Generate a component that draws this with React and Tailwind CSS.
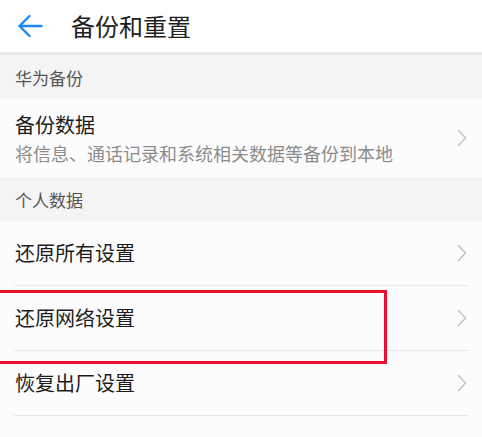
import React from "react";

const font = { fontFamily: '"Noto Sans CJK SC", "Noto Sans", sans-serif' };

function Chevron() {
  return (
    <svg width="10" height="18" viewBox="0 0 10 18" className="shrink-0">
      <path d="M1.5 1.5 L8.5 9 L1.5 16.5" fill="none" stroke="#c4c4c4" strokeWidth="1.6" strokeLinecap="round" strokeLinejoin="round" />
    </svg>
  );
}

function Row({ title, divider = true }) {
  return (
    <div className="h-[65px] flex flex-col">
      <div className="flex-1 flex items-center justify-between pl-[15px] pr-[15px]">
        <span className="text-[20px] leading-none text-[#1c1c1c]">{title}</span>
        <Chevron />
      </div>
      {divider && <div className="mx-[14px] h-px bg-[#e8e8e8]" />}
    </div>
  );
}

export default function App() {
  return (
    <div className="w-[482px] h-[437px] bg-[#fcfcfc] relative overflow-hidden" style={font}>
      <div className="h-[52px] bg-white flex items-center">
        <svg width="26" height="24" viewBox="0 0 26 24" className="ml-[17px]">
          <path d="M24.5 12 H2.5 M12.5 2 L2.5 12 L12.5 22" fill="none" stroke="#1f87f2" strokeWidth="2.4" strokeLinecap="round" strokeLinejoin="round" />
        </svg>
        <span className="ml-[28px] text-[24px] leading-none text-[#202020]">备份和重置</span>
      </div>
      <div className="h-[3px] bg-[#e6e6e6]" />
      <div className="h-[44px] bg-[#f4f4f4] flex items-center px-[15px]">
        <span className="text-[17px] leading-none text-[#555555]">华为备份</span>
      </div>
      <div className="h-[78px] bg-[#fcfcfc] flex items-center justify-between px-[15px]">
        <div className="flex flex-col gap-[9px]">
          <span className="text-[20px] leading-none text-[#1c1c1c]">备份数据</span>
          <span className="text-[18px] leading-none text-[#8c8c8c]">将信息、通话记录和系统相关数据等备份到本地</span>
        </div>
        <Chevron />
      </div>
      <div className="h-[44px] bg-[#f4f4f4] flex items-center px-[15px]">
        <span className="text-[17px] leading-none text-[#555555]">个人数据</span>
      </div>
      <Row title="还原所有设置" />
      <Row title="还原网络设置" />
      <Row title="恢复出厂设置" />
      <div className="absolute left-[-4px] top-[290px] w-[391px] h-[74px] border-[3px] border-[#e8102e]" />
    </div>
  );
}
